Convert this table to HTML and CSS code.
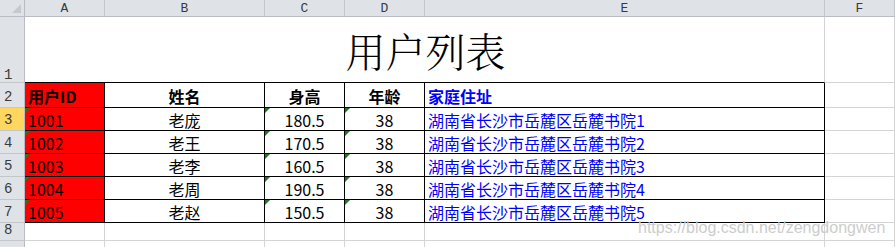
FILE: index.html
```html
<!DOCTYPE html>
<html lang="zh">
<head>
<meta charset="utf-8">
<title>用户列表</title>
<link rel="stylesheet" href="styles.css">
</head>
<body>
<div class="page">
  <div class="sheet">
    <div class="corner"><span class="corner-tri"></span></div>
    <div class="ch">A</div>
    <div class="ch">B</div>
    <div class="ch">C</div>
    <div class="ch">D</div>
    <div class="ch">E</div>
    <div class="ch">F</div>

    <div class="rh rh-bottom">1</div>
    <div class="title">用户列表</div>
    <div class="cell"></div>

    <div class="rh">2</div>
    <div class="t red left bold">用户ID</div>
    <div class="t center bold">姓名</div>
    <div class="t center bold">身高</div>
    <div class="t center bold">年龄</div>
    <div class="t left bold blue">家庭住址</div>
    <div class="cell"></div>

    <div class="rh sel">3</div>
    <div class="t red left mark">1001</div>
    <div class="t center">老庞</div>
    <div class="t center mark">180.5</div>
    <div class="t center mark">38</div>
    <div class="t left blue">湖南省长沙市岳麓区岳麓书院1</div>
    <div class="cell"></div>

    <div class="rh">4</div>
    <div class="t red left mark">1002</div>
    <div class="t center">老王</div>
    <div class="t center mark">170.5</div>
    <div class="t center mark">38</div>
    <div class="t left blue">湖南省长沙市岳麓区岳麓书院2</div>
    <div class="cell"></div>

    <div class="rh">5</div>
    <div class="t red left mark">1003</div>
    <div class="t center">老李</div>
    <div class="t center mark">160.5</div>
    <div class="t center mark">38</div>
    <div class="t left blue">湖南省长沙市岳麓区岳麓书院3</div>
    <div class="cell"></div>

    <div class="rh">6</div>
    <div class="t red left mark">1004</div>
    <div class="t center">老周</div>
    <div class="t center mark">190.5</div>
    <div class="t center mark">38</div>
    <div class="t left blue">湖南省长沙市岳麓区岳麓书院4</div>
    <div class="cell"></div>

    <div class="rh">7</div>
    <div class="t red left mark">1005</div>
    <div class="t center">老赵</div>
    <div class="t center mark">150.5</div>
    <div class="t center mark">38</div>
    <div class="t left blue">湖南省长沙市岳麓区岳麓书院5</div>
    <div class="cell"></div>

    <div class="rh">8</div>
    <div class="cell"></div>
    <div class="cell"></div>
    <div class="cell"></div>
    <div class="cell"></div>
    <div class="cell"></div>
    <div class="cell"></div>

    <div class="rh"></div>
    <div class="cell"></div>
    <div class="cell"></div>
    <div class="cell"></div>
    <div class="cell"></div>
    <div class="cell"></div>
    <div class="cell"></div>
  </div>
  <div class="watermark">https://blog.csdn.net/zengdongwen</div>
</div>
</body>
</html>
```

FILE: styles.css
```css
html, body {
  margin: 0;
  padding: 0;
  background: #ffffff;
}

.page {
  position: relative;
  width: 895px;
  height: 247px;
  overflow: hidden;
}

.sheet {
  display: grid;
  grid-template-columns: 25px 80px 160px 80px 80px 400px 70px;
  grid-template-rows: 17px 66px 25px 23px 23px 23px 23px 23px 18px 18px;
  font-family: "Noto Sans CJK SC", "Noto Sans", sans-serif;
  font-size: 16px;
  color: #000;
}

.sheet > div {
  box-sizing: border-box;
  min-width: 0;
  overflow: hidden;
}

.corner {
  position: relative;
  background: #dfe3e8;
  border-right: 1px solid #b9bdc3;
  border-bottom: 1px solid #b9bdc3;
}

.corner-tri {
  position: absolute;
  right: 3px;
  bottom: 3px;
  width: 0;
  height: 0;
  border-left: 9px solid transparent;
  border-bottom: 9px solid #c5c9ce;
}

.ch {
  background: #dfe3e8;
  border-right: 1px solid #c3c7cc;
  border-bottom: 1px solid #b9bdc3;
  display: flex;
  align-items: center;
  justify-content: center;
  font-family: "Liberation Mono", monospace;
  font-size: 13px;
  color: #3a3a3a;
  padding-top: 1px;
}

.rh {
  background: #dfe3e8;
  border-right: 1px solid #b9bdc3;
  border-bottom: 1px solid #c3c7cc;
  display: flex;
  align-items: flex-end;
  padding-left: 4px;
  padding-bottom: 3px;
  font-family: "Liberation Mono", monospace;
  font-size: 14px;
  line-height: 13px;
  color: #3a3a3a;
}

.rh-bottom {
  padding-bottom: 0;
}

.rh.sel {
  background: #ffd75e;
}

.cell {
  border-right: 1px solid #d4d4d4;
  border-bottom: 1px solid #d4d4d4;
}

.title {
  grid-column: 2 / 7;
  border-right: 1px solid #d4d4d4;
  border-bottom: 1px solid #000;
  display: flex;
  align-items: flex-end;
  justify-content: center;
  font-family: "Noto Serif CJK SC", "Noto Sans CJK SC", serif;
  font-weight: 300;
  font-size: 40px;
  line-height: 40px;
  padding-bottom: 12px;
  padding-left: 2px;
}

.t {
  position: relative;
  border-right: 1px solid #000;
  border-bottom: 1px solid #000;
  display: flex;
  align-items: center;
  line-height: 20px;
  padding-top: 2px;
  white-space: nowrap;
}

.left {
  justify-content: flex-start;
  padding-left: 3px;
}

.center {
  justify-content: center;
}

.bold {
  font-weight: 700;
}

.red {
  background: #ff0000;
}

.blue {
  color: #0000ff;
}

.mark::before {
  content: "";
  position: absolute;
  left: 0;
  top: 0;
  width: 0;
  height: 0;
  border-top: 5px solid #1f7a1f;
  border-right: 5px solid transparent;
}

.watermark {
  position: absolute;
  left: 638px;
  top: 220px;
  font-family: "Liberation Sans", Arial, sans-serif;
  font-size: 16px;
  line-height: 16px;
  color: #cdcdcd;
  white-space: nowrap;
}
```
